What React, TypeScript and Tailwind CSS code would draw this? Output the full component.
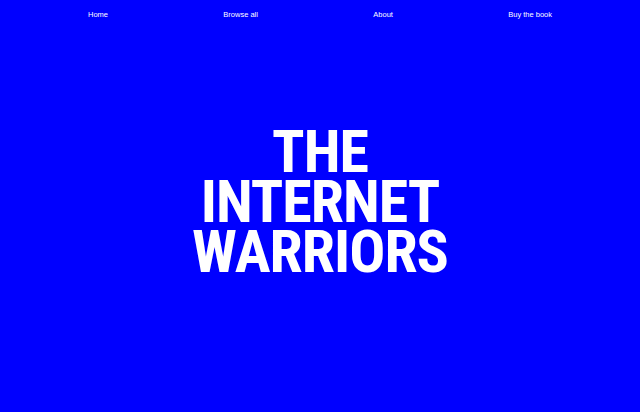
const links = ["Home", "Browse all", "About", "Buy the book"];

export default function App() {
  return (
    <div className="flex h-[412px] flex-col bg-[#0000ff] text-white">
      <nav className="flex justify-between px-[88px] pt-[10px] font-['Liberation_Sans',Arial,sans-serif] text-[7.5px] leading-[10px]">
        {links.map((link) => (
          <a key={link} href="#" className="text-white">
            {link}
          </a>
        ))}
      </nav>

      <main className="flex flex-1 items-center justify-center pb-[28px]">
        <h1 className="text-center font-['Roboto_Condensed',Roboto,sans-serif] text-[60px] font-bold uppercase leading-[50px] tracking-[-1px]">
          The
          <br />
          Internet
          <br />
          Warriors
        </h1>
      </main>
    </div>
  );
}
